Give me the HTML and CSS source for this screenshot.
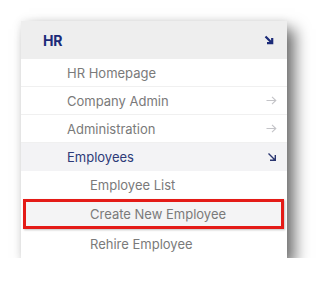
FILE: index.html
```html
<!DOCTYPE html>
<html>
<head>
<meta charset="utf-8">
<link rel="stylesheet" href="styles.css">
</head>
<body>
<div class="page">
  <div class="panel">
    <div class="header">
      <span class="title">HR</span>
      <svg class="icon" width="10" height="10" viewBox="0 0 10 10"><path d="M1.5 1.5L8 8M3 8.2H8.2V3" fill="none" stroke="#1b2a78" stroke-width="2.2"/></svg>
    </div>
    <div class="row l1"><span>HR Homepage</span></div>
    <div class="row l1"><span>Company Admin</span>
      <svg class="icon" width="11" height="9" viewBox="0 0 11 9"><path d="M0.5 4.5H10M6 0.8L9.8 4.5L6 8.2" fill="none" stroke="#c4c4c8" stroke-width="1.1"/></svg>
    </div>
    <div class="row l1"><span>Administration</span>
      <svg class="icon" width="11" height="9" viewBox="0 0 11 9"><path d="M0.5 4.5H10M6 0.8L9.8 4.5L6 8.2" fill="none" stroke="#c4c4c8" stroke-width="1.1"/></svg>
    </div>
    <div class="row l1 open"><span>Employees</span>
      <svg class="icon" width="10" height="10" viewBox="0 0 10 10"><path d="M1.5 1.5L8 8M3 8.3H8.3V3" fill="none" stroke="#2a3670" stroke-width="1.4"/></svg>
    </div>
    <div class="row l2"><span>Employee List</span></div>
    <div class="row l2 selected"><span>Create New Employee</span></div>
    <div class="row l2 last"><span>Rehire Employee</span></div>
  </div>
</div>
</body>
</html>
```
FILE: styles.css
```css
html, body {
  margin: 0;
  padding: 0;
  background: #ffffff;
}
.page {
  padding: 21px 0 0 21px;
}
.panel {
  width: 266px;
  background: #ffffff;
  box-shadow: 8px 8px 14px rgba(0,0,0,0.55), 0 0 8px rgba(0,0,0,0.08);
  font-family: Inter, "Noto Sans", sans-serif;
}
.header {
  height: 38px;
  background: #eeeeee;
  display: flex;
  align-items: center;
  justify-content: space-between;
  padding: 0 11px 0 22px;
}
.title {
  font-size: 14px;
  font-weight: 700;
  color: #1b2a78;
  letter-spacing: -0.3px;
}
.row {
  height: 28px;
  box-sizing: border-box;
  display: flex;
  align-items: center;
  justify-content: space-between;
  padding-right: 8px;
  border-bottom: 1px solid #f0f0f0;
  font-size: 13px;
  color: #7a7a7a;
}
.l1 { padding-left: 46px; }
.l2 { padding-left: 69px; border-bottom: none; }
.open {
  background: #f3f3f5;
  color: #2d3a78;
  border-bottom: none;
}
.selected {
  background: #f4f4f5;
  border: 3px solid #e41b17;
  box-shadow: 1px 1px 2px rgba(0,0,0,0.25);
  margin: 0 3px 0 2px;
  padding-left: 64px;
  height: 30px;
}
.last {
  height: 29px;
}
.icon {
  display: block;
  margin-right: 2px;
}
```
